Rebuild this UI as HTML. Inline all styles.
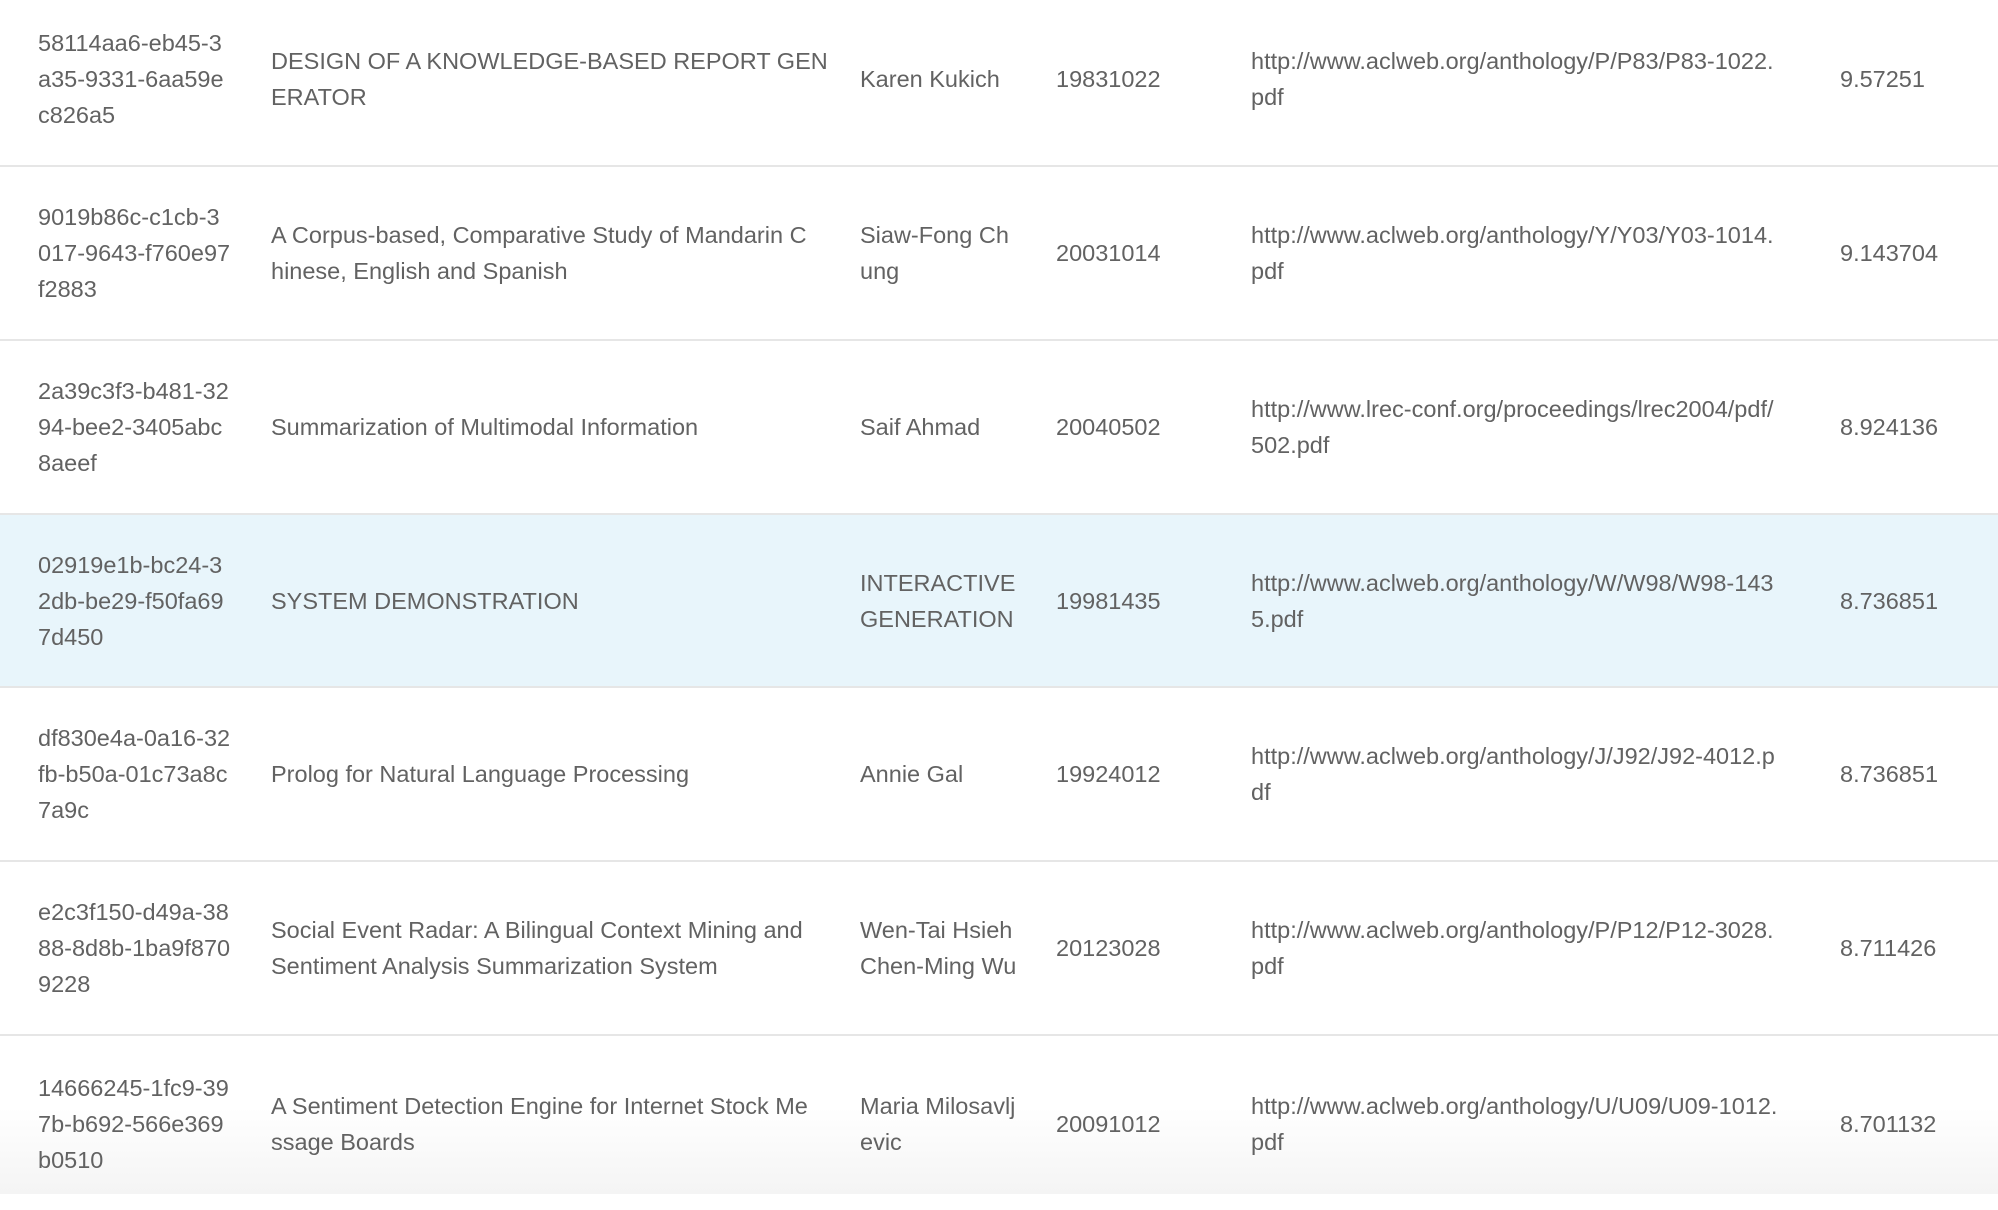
<!DOCTYPE html>
<html><head><meta charset="utf-8"><style>
body{margin:0;width:1998px;height:1194px;overflow:hidden;background:#fff;font-family:"Liberation Sans",Arial,sans-serif;color:#626262;font-size:23.5px;line-height:36px;position:relative}
.r{position:absolute;left:0;width:1998px;height:172px;border-bottom:2px solid #e6e6e6;display:flex;align-items:center}
.c{position:absolute;white-space:nowrap}
.a{left:38px}.b{left:271px}.d{left:860px}.e{left:1056px}.f{left:1251px}.g{left:1840px}
.hl{background:#e8f5fb}
.fade{position:absolute;left:0;top:1038px;width:1998px;height:156px;background:linear-gradient(#fff 0%,#fff 45%,#f4f4f4 100%)}
</style></head><body>
<div class="fade"></div>
<div class="r" style="top:-7px"><div class="c a">58114aa6-eb45-3<br>a35-9331-6aa59e<br>c826a5</div><div class="c b">DESIGN OF A KNOWLEDGE-BASED REPORT GEN<br>ERATOR</div><div class="c d">Karen Kukich</div><div class="c e">19831022</div><div class="c f">http://www.aclweb.org/anthology/P/P83/P83-1022.<br>pdf</div><div class="c g">9.57251</div></div>
<div class="r" style="top:167px"><div class="c a">9019b86c-c1cb-3<br>017-9643-f760e97<br>f2883</div><div class="c b">A Corpus-based, Comparative Study of Mandarin C<br>hinese, English and Spanish</div><div class="c d">Siaw-Fong Ch<br>ung</div><div class="c e">20031014</div><div class="c f">http://www.aclweb.org/anthology/Y/Y03/Y03-1014.<br>pdf</div><div class="c g">9.143704</div></div>
<div class="r" style="top:341px"><div class="c a">2a39c3f3-b481-32<br>94-bee2-3405abc<br>8aeef</div><div class="c b">Summarization of Multimodal Information</div><div class="c d">Saif Ahmad</div><div class="c e">20040502</div><div class="c f">http://www.lrec-conf.org/proceedings/lrec2004/pdf/<br>502.pdf</div><div class="c g">8.924136</div></div>
<div class="r hl" style="top:515px;height:171px"><div class="c a">02919e1b-bc24-3<br>2db-be29-f50fa69<br>7d450</div><div class="c b">SYSTEM DEMONSTRATION</div><div class="c d">INTERACTIVE<br>GENERATION</div><div class="c e">19981435</div><div class="c f">http://www.aclweb.org/anthology/W/W98/W98-143<br>5.pdf</div><div class="c g">8.736851</div></div>
<div class="r" style="top:688px"><div class="c a">df830e4a-0a16-32<br>fb-b50a-01c73a8c<br>7a9c</div><div class="c b">Prolog for Natural Language Processing</div><div class="c d">Annie Gal</div><div class="c e">19924012</div><div class="c f">http://www.aclweb.org/anthology/J/J92/J92-4012.p<br>df</div><div class="c g">8.736851</div></div>
<div class="r" style="top:862px"><div class="c a">e2c3f150-d49a-38<br>88-8d8b-1ba9f870<br>9228</div><div class="c b">Social Event Radar: A Bilingual Context Mining and<br>Sentiment Analysis Summarization System</div><div class="c d">Wen-Tai Hsieh<br>Chen-Ming Wu</div><div class="c e">20123028</div><div class="c f">http://www.aclweb.org/anthology/P/P12/P12-3028.<br>pdf</div><div class="c g">8.711426</div></div>
<div class="r" style="top:1038px;border-bottom:none;background:transparent"><div class="c a">14666245-1fc9-39<br>7b-b692-566e369<br>b0510</div><div class="c b">A Sentiment Detection Engine for Internet Stock Me<br>ssage Boards</div><div class="c d">Maria Milosavlj<br>evic</div><div class="c e">20091012</div><div class="c f">http://www.aclweb.org/anthology/U/U09/U09-1012.<br>pdf</div><div class="c g">8.701132</div></div>
</body></html>
